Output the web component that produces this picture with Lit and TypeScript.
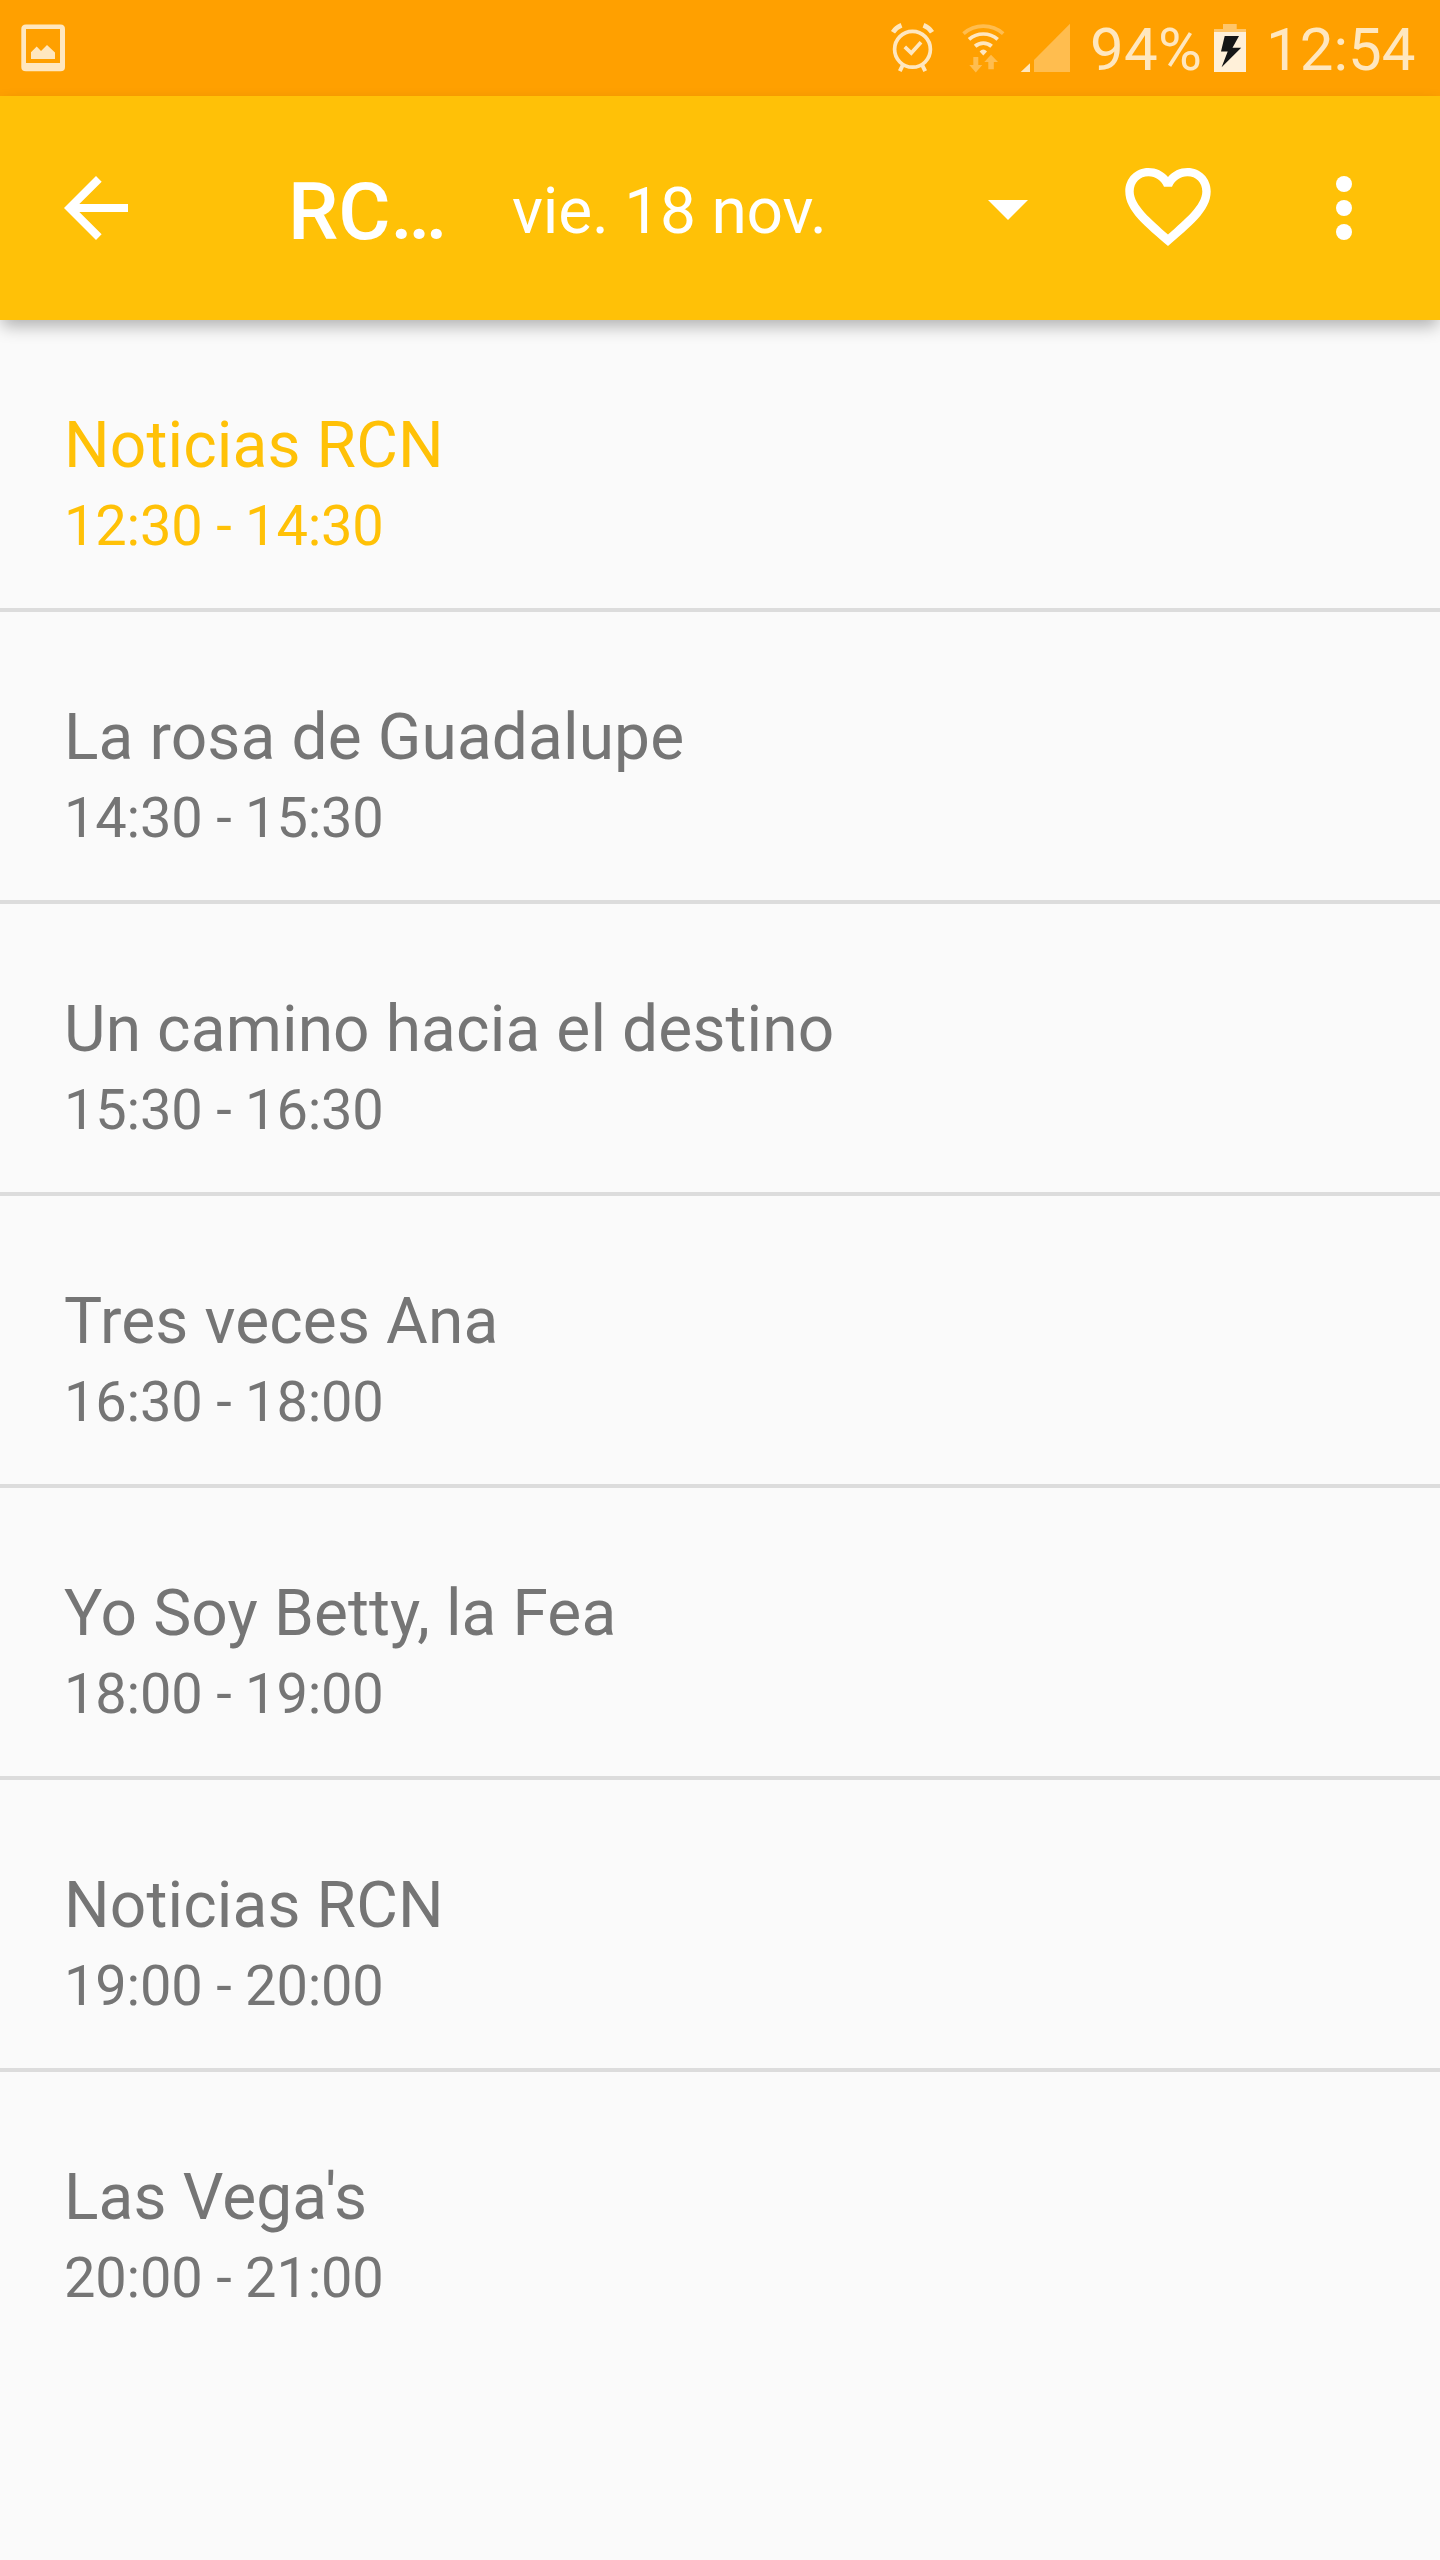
import { LitElement, html, css, svg } from "lit";
import { customElement, property } from "lit/decorators.js";
import { classMap } from "lit/directives/class-map.js";

interface Programme {
  title: string;
  time: string;
  live?: boolean;
}

const PROGRAMMES: Programme[] = [
  { title: "Noticias RCN", time: "12:30 - 14:30", live: true },
  { title: "La rosa de Guadalupe", time: "14:30 - 15:30" },
  { title: "Un camino hacia el destino", time: "15:30 - 16:30" },
  { title: "Tres veces Ana", time: "16:30 - 18:00" },
  { title: "Yo Soy Betty, la Fea", time: "18:00 - 19:00" },
  { title: "Noticias RCN", time: "19:00 - 20:00" },
  { title: "Las Vega's", time: "20:00 - 21:00" },
];

@customElement("status-bar")
export class StatusBar extends LitElement {
  static styles = css`
    :host {
      display: flex;
      align-items: stretch;
      height: 96px;
      background: #ffa000;
      color: #ffe7bf;
      font-family: Roboto, "Liberation Sans", sans-serif;
    }
    svg {
      display: block;
      height: 96px;
      flex: none;
    }
    .bright { fill: #ffe7bf; }
    .line { fill: none; stroke: #ffe7bf; }
    .faint { fill: #ffbd4f; }
    .faint-line { fill: none; stroke: #ffbd4f; }
    .picture { width: 48px; margin-left: 20px; }
    .spacer { flex: 1; }
    .alarm { width: 46px; margin-right: 24px; }
    .wifi { width: 46px; margin-right: 14px; }
    .signal { width: 52px; margin-right: 18px; }
    .text {
      flex: none;
      font-size: 60px;
      line-height: 70px;
      padding-top: 15px;
      white-space: pre;
    }
    .level { width: 124px; letter-spacing: 0.3px; }
    .battery { width: 32px; margin-right: 20px; }
    .clock { width: 174px; }
  `;

  render() {
    return html`
      <svg class="picture" viewBox="20 0 48 96">
        <path class="bright" fill-rule="evenodd"
          d="M26 24.5H60.500Q65 24.500 65 29V67Q65 71.300 60.500 71.300H26Q21.300 71.300 21.300 67V29Q21.300 24.500 26 24.500ZM26 29V63H60V29ZM31 52.300L36.700 46.500L41 51L47 45L55 52.500V59H31Z" />
      </svg>
      <div class="spacer"></div>
      <svg class="alarm" viewBox="890 0 46 96">
        <circle class="line" cx="912.5" cy="49.3" r="17.9" stroke-width="3.7" />
        <path class="line" stroke-width="3.700" d="M904.800 46.800L911.300 53L921 42.300" />
        <path class="line" stroke-width="4.800" d="M893 32.200Q896 27.500 901.500 25.300M932 32.200Q929 27.500 923.500 25.300" />
        <path class="line" stroke-width="4" d="M903.300 64L899.800 71.200M921.700 64L925.200 71.200" />
      </svg>
      <svg class="wifi" viewBox="960 0 46 96">
        <path class="faint-line" stroke-width="3.700" d="M963.500 33.700A30 30 0 0 1 1003.200 33.700" />
        <path class="line" stroke-width="3.700" d="M969 39.400A21.700 21.700 0 0 1 997.700 39.400" />
        <path class="line" stroke-width="3.900" d="M975.100 46.200A12.500 12.500 0 0 1 991.600 46.200" />
        <path class="bright" d="M979.600 51.500Q983.300 47.500 987 51.500L983.300 55.500Z" />
        <path class="faint" d="M973.300 57H978.300V65H982.300L975.800 72.500L969.300 65H973.300Z" />
        <path class="faint" d="M988.300 69.200H993.800V62H998L991 54.700L984.300 62H988.300Z" />
      </svg>
      <svg class="signal" viewBox="1020 0 52 96">
        <path class="bright" d="M1020.700 72L1030 63.200V72Z" />
        <path class="faint" d="M1034 72V60L1070 23.700V72Z" />
      </svg>
      <div class="text level">94%</div>
      <svg class="battery" viewBox="1214 0 32 96">
        <path fill="#ffc66a" d="M1223 24H1236.700V29H1246V32H1214V29H1223Z" />
        <path fill="#fff0d9" d="M1214 32H1246V72H1214Z" />
        <path fill="#161616" d="M1224.700 36H1239L1232.500 47.700H1241.200L1221.600 67.300L1227.700 51.500H1221Z" />
      </svg>
      <div class="text clock">12:54</div>
    `;
  }
}

@customElement("tool-bar")
export class ToolBar extends LitElement {
  @property() heading = "";
  @property() date = "";

  static styles = css`
    :host {
      display: flex;
      align-items: center;
      height: 224px;
      background: #ffc107;
      color: #fff;
      font-family: Roboto, "Liberation Sans", sans-serif;
      box-shadow: 0 8px 16px -2px rgba(0, 0, 0, 0.3);
      position: relative;
    }
    svg {
      display: block;
      flex: none;
      width: 96px;
      height: 96px;
      fill: #fff;
    }
    .back { margin-left: 48px; }
    .heading {
      width: 176px;
      margin-left: 144px;
      font-size: 80px;
      font-weight: 500;
      line-height: 94px;
      padding-top: 8px;
      letter-spacing: -0.2px;
      white-space: nowrap;
    }
    .date {
      flex: 1;
      margin-left: 48px;
      font-size: 64px;
      line-height: 76px;
      padding-top: 8px;
      letter-spacing: -0.2px;
      white-space: nowrap;
    }
    .heart { margin: 0 80px 0 64px; }
    .more { margin-right: 48px; }
  `;

  render() {
    return html`
      <svg class="back" viewBox="0 0 24 24">
        <path d="M20 11H7.830l5.590-5.590L12 4l-8 8 8 8 1.410-1.410L7.830 13H20v-2z" />
      </svg>
      <div class="heading">${this.heading}</div>
      <div class="date">${this.date}</div>
      <svg class="caret" viewBox="0 0 24 24"><path d="M7 10l5 5 5-5z" /></svg>
      <svg class="heart" viewBox="1120 160 96 96">
        <path fill-rule="evenodd"
          d="M1168 246C1146 227 1125.300 211 1125.300 191.500C1125.300 178 1135.500 168 1148.500 168C1156 168 1163.300 171.300 1168 177C1172.700 171.300 1180 168 1187.500 168C1200.500 168 1210.700 178 1210.700 191.500C1210.700 211 1190 227 1168 246ZM1168 234.500C1185 219.500 1202.300 205 1202.300 191.500C1202.300 182.500 1196 176.300 1187.500 176.300C1180.500 176.300 1174.500 180.500 1172 186.700H1164C1161.500 180.500 1155.500 176.300 1148.500 176.300C1140 176.300 1133.700 182.500 1133.700 191.500C1133.700 205 1151 219.500 1168 234.500Z" />
      </svg>
      <svg class="more" viewBox="0 0 24 24">
        ${[6, 12, 18].map((y) => svg`<circle cx="12" cy=${y} r="2" />`)}
      </svg>
    `;
  }
}

@customElement("app-root")
export class AppRoot extends LitElement {
  static styles = css`
    :host {
      display: flex;
      flex-direction: column;
      width: 1440px;
      height: 2560px;
      overflow: hidden;
      background: #fafafa;
      color: #757575;
      font-family: Roboto, "Liberation Sans", sans-serif;
    }
    .row {
      box-sizing: border-box;
      height: 292px;
      padding: 88px 64px 0;
      border-bottom: 4px solid #dcdcdc;
      white-space: nowrap;
    }
    .row:last-child { border-bottom: none; }
    .live { color: #ffc107; }
    .title { font-size: 64px; line-height: 76px; letter-spacing: 0.13px; }
    .time { margin-top: 9px; font-size: 56px; line-height: 66px; letter-spacing: -0.2px; }
  `;

  render() {
    return html`
      <status-bar></status-bar>
      <tool-bar heading="RC…" date="vie. 18 nov."></tool-bar>
      <div class="list">
        ${PROGRAMMES.map(
          (p) => html`
            <div class=${classMap({ row: true, live: !!p.live })}>
              <div class="title">${p.title}</div>
              <div class="time">${p.time}</div>
            </div>
          `
        )}
      </div>
    `;
  }
}
